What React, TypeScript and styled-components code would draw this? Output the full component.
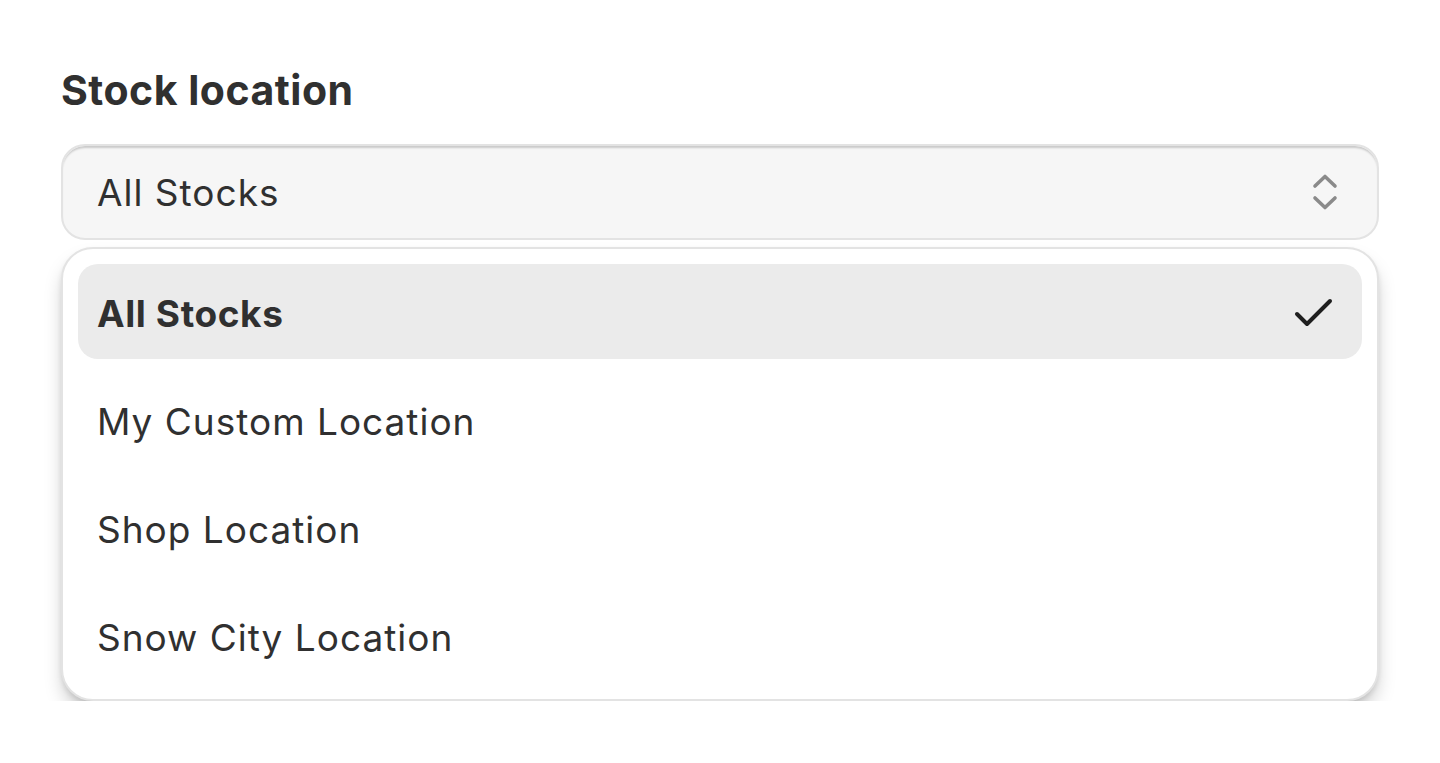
import React from 'react';
import styled, { createGlobalStyle } from 'styled-components';

const GlobalStyle = createGlobalStyle`
  html, body {
    margin: 0;
    padding: 0;
    background: #ffffff;
  }
  body {
    font-family: Inter, "Noto Sans", sans-serif;
    color: #303030;
  }
`;

const options = ['All Stocks', 'My Custom Location', 'Shop Location', 'Snow City Location'];

const Page = styled.div`
  padding: 64px 61px 0 61px;
  width: 1440px;
  box-sizing: border-box;
`;

const Label = styled.div`
  font-size: 41px;
  font-weight: 650;
  line-height: 52px;
  letter-spacing: 0.5px;
  margin-bottom: 28px;
`;

const Trigger = styled.div`
  height: 96px;
  box-sizing: border-box;
  border-radius: 24px;
  background: #f6f6f6;
  border: 2px solid #e3e3e3;
  box-shadow: inset 0 3px 2px -1px rgba(0, 0, 0, 0.18);
  display: flex;
  align-items: center;
  justify-content: space-between;
  padding: 0 36px 0 34px;
  font-size: 37px;
  letter-spacing: 1px;
`;

const Popover = styled.div`
  margin-top: 7px;
  border-radius: 32px;
  background: #ffffff;
  border: 2px solid #e3e3e3;
  box-shadow: 0 12px 20px -4px rgba(0, 0, 0, 0.26), 0 3px 5px rgba(0, 0, 0, 0.08);
  padding: 15px 15px 16px;
  display: flex;
  flex-direction: column;
  gap: 13px;
`;

const Option = styled.div<{ $selected?: boolean }>`
  height: 95px;
  border-radius: 20px;
  display: flex;
  align-items: center;
  justify-content: space-between;
  padding: 3px 28px 0 19px;
  box-sizing: border-box;
  font-size: 37px;
  letter-spacing: ${(p) => (p.$selected ? '0.6px' : '1px')};
  font-weight: ${(p) => (p.$selected ? 650 : 400)};
  background: ${(p) => (p.$selected ? '#ebebeb' : 'transparent')};
`;

const Chevrons = () => (
  <svg width="32" height="42" viewBox="0 0 32 42" fill="none">
    <path d="M6 15 L16 5.5 L26 15" stroke="#8a8a8a" strokeWidth="3.6" strokeLinecap="round" strokeLinejoin="round" />
    <path d="M6 27 L16 36.5 L26 27" stroke="#8a8a8a" strokeWidth="3.6" strokeLinecap="round" strokeLinejoin="round" />
  </svg>
);

const Check = () => (
  <svg width="40" height="34" viewBox="0 0 40 34" fill="none">
    <path d="M3 18 L13 28 L36 5" stroke="#1f1f1f" strokeWidth="4" strokeLinecap="round" strokeLinejoin="round" />
  </svg>
);

export default function App() {
  return (
    <>
      <GlobalStyle />
      <Page>
        <Label>Stock location</Label>
        <Trigger>
          <span>All Stocks</span>
          <Chevrons />
        </Trigger>
        <Popover>
          {options.map((o, i) => (
            <Option key={o} $selected={i === 0}>
              <span>{o}</span>
              {i === 0 && <Check />}
            </Option>
          ))}
        </Popover>
      </Page>
    </>
  );
}
